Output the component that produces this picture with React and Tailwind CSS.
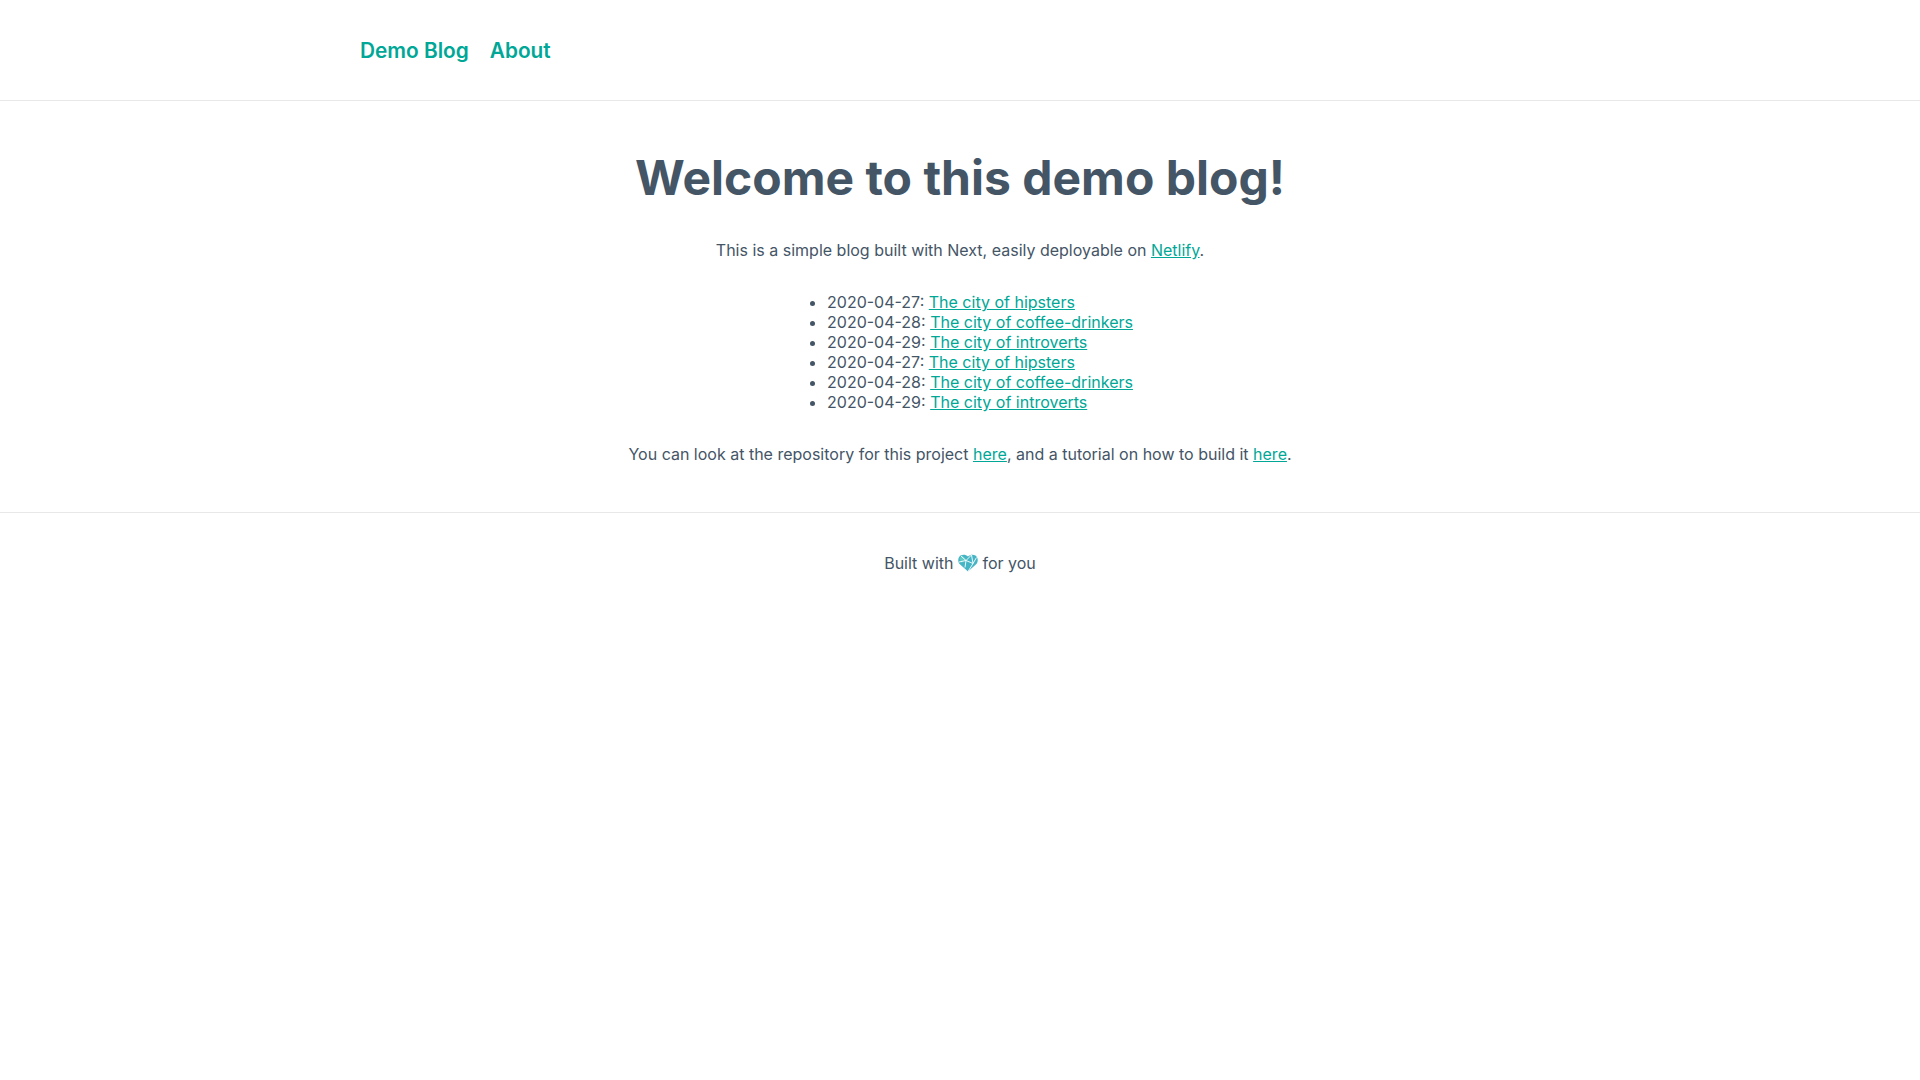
import React from "react";

const posts = [
  { date: "2020-04-27", title: "The city of hipsters" },
  { date: "2020-04-28", title: "The city of coffee-drinkers" },
  { date: "2020-04-29", title: "The city of introverts" },
  { date: "2020-04-27", title: "The city of hipsters" },
  { date: "2020-04-28", title: "The city of coffee-drinkers" },
  { date: "2020-04-29", title: "The city of introverts" },
];

const TextLink = ({ children }) => (
  <a href="#" className="text-[#00a796] underline">
    {children}
  </a>
);

const HeartGem = () => (
  <svg viewBox="0 0 20 18" className="inline-block w-5 h-[18px] align-[-3px]">
    <path
      d="M10 17.5 1.6 10C-.4 7.6-.2 3.4 2.5 1.6 5 .2 8 .6 10 2.6c2-2 5-2.4 7.5-1 2.7 1.8 2.9 6 .9 8.4z"
      fill="#45b5c6"
    />
    <path d="M1.6 4.5 4 1.2 8 5.5 3.5 9z" fill="#5fc9c4" />
    <path
      d="M3 2l5 4.5-1 7M8 6.5l5.5-5.5M8 6.5l7 3-5 8M15 9.5l3.5-6M13.5 1l1.5 8.5M1 8l7-1.5"
      fill="none"
      stroke="#ffffff"
      strokeWidth="0.9"
    />
  </svg>
);

export default function App() {
  return (
    <div className="min-h-screen bg-white text-[#445566] font-['Inter',sans-serif] text-base leading-5">
      <header className="h-[101px] pt-[2px] border-b border-[#e8e8e8]">
        <nav className="w-[1200px] mx-auto h-full flex items-center gap-[21px] text-[20.8px] font-semibold text-[#00a796]">
          <a href="#">Demo Blog</a>
          <a href="#">About</a>
        </nav>
      </header>
      <main className="border-b border-[#e8e8e8] pb-[48px] text-center">
        <h1 className="pt-[48px] text-[48px] leading-[58px] font-bold">
          Welcome to this demo blog!
        </h1>
        <p className="mt-[33px]">
          This is a simple blog built with Next, easily deployable on <TextLink>Netlify</TextLink>.
        </p>
        <div className="mt-[32px] flex justify-center">
          <ul className="list-disc text-left pl-[40px]">
            {posts.map((post, i) => (
              <li key={i}>
                {post.date}: <TextLink>{post.title}</TextLink>
              </li>
            ))}
          </ul>
        </div>
        <p className="mt-[32px]">
          You can look at the repository for this project <TextLink>here</TextLink>, and a tutorial on how to build it <TextLink>here</TextLink>.
        </p>
      </main>
      <footer className="pt-[40px] text-center">
        Built with <HeartGem /> for you
      </footer>
    </div>
  );
}
